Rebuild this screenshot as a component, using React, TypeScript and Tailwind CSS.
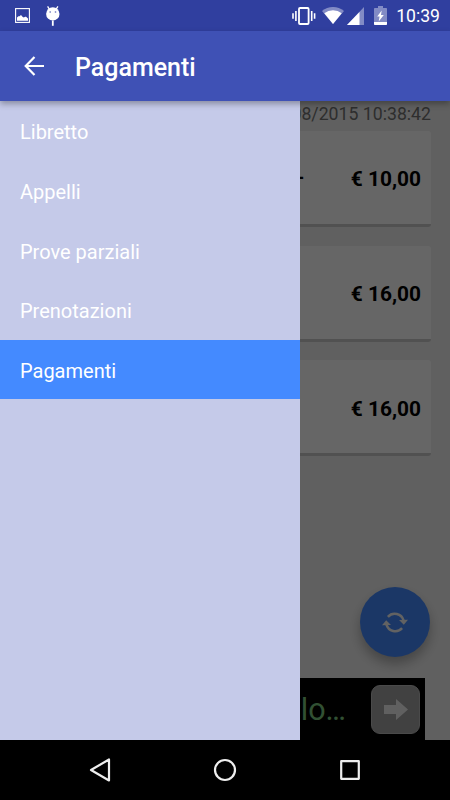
import { useState } from 'react';

const menuItems = ['Libretto', 'Appelli', 'Prove parziali', 'Prenotazioni', 'Pagamenti'];

const payments = [
  { id: 1, label: '–', amount: '€ 10,00' },
  { id: 2, label: '', amount: '€ 16,00' },
  { id: 3, label: '', amount: '€ 16,00' },
];

function StatusBar() {
  return (
    <div className="flex h-[31px] items-center bg-[#303f9f] text-white">
      {/* Notifications */}
      <svg className="ml-[15px]" width="15" height="15" viewBox="0 0 15 15">
        <rect x="0.6" y="0.6" width="13.8" height="13.8" fill="none" stroke="currentColor" strokeWidth="1.1" />
        <path d="M2 12.7V9.6l1.4-1.3h1.1L6 7l1.5 1.7 1.3.8 1.3-.8h1l1.9 1.8v2.2z" fill="currentColor" />
      </svg>
      <svg className="ml-[15px]" width="16" height="20" viewBox="0 0 16 20">
        <path d="M2.6 .4l2.2 3.4M12.9.4l-2.2 3.4" stroke="currentColor" strokeWidth="1.3" />
        <ellipse cx="7.8" cy="7.9" rx="6.7" ry="6.6" fill="currentColor" />
        <path d="M4.5 6h1.4M9.8 6h1.4" stroke="#303f9f" strokeWidth="1.1" />
        <path d="M7.8 14.5v5.3" stroke="currentColor" strokeWidth="1.8" />
      </svg>

      {/* System icons */}
      <svg className="ml-auto" width="24" height="18" viewBox="0 0 24 18">
        <rect x="7" y="1" width="9.6" height="16" rx="1" fill="none" stroke="currentColor" strokeWidth="1.8" />
        <path d="M3.9 4v10M1 6.2v5.6M19.7 4v10M22.6 6.2v5.6" stroke="currentColor" strokeWidth="1.6" />
      </svg>
      <svg className="ml-[6px]" width="22" height="17" viewBox="0 0 22 17">
        <path d="M0 4a17.5 17.5 0 0 1 22 0L11 17z" fill="currentColor" opacity=".4" />
        <path d="M2.3 6.2a14 14 0 0 1 17.4 0L11 17z" fill="currentColor" />
      </svg>
      <svg className="ml-[3px]" width="17" height="18" viewBox="0 0 17 18">
        <path d="M0 18L17 0v18z" fill="currentColor" opacity=".4" />
        <path d="M0 18L12.5 5v13z" fill="currentColor" />
      </svg>
      <svg className="ml-[10px]" width="13" height="19" viewBox="0 0 13 19">
        <path d="M4 0h5v2h3.2q.8 0 .8.8V16H0V2.8Q0 2 .8 2H4z" fill="currentColor" opacity=".4" />
        <path d="M0 16h13v2.2q0 .8-.8.8H.8q-.8 0-.8-.8z" fill="currentColor" />
        <path d="M7.7 4.4L3.2 10.5h2.4l-.9 5 5.1-6.5H7z" fill="currentColor" />
      </svg>
      <span className="mr-[10px] ml-[9px] pt-[2px] text-[17.6px] leading-none">10:39</span>
    </div>
  );
}

function Toolbar({ title }: { title: string }) {
  return (
    <header className="relative z-20 flex h-[70px] items-center bg-[#3f51b5] text-white shadow-[0_3px_6px_rgba(0,0,0,0.3)]">
      <button className="ml-[24px]">
        <svg width="21" height="20" viewBox="0 0 21 20" fill="none" stroke="currentColor" strokeWidth="2.2">
          <path d="M20 10H2M10.5 1L1.7 10l8.8 9" />
        </svg>
      </button>
      <h1 className="ml-[30px] pt-[2px] text-[25px] leading-none font-medium">{title}</h1>
    </header>
  );
}

function Drawer({ selected, onSelect }: { selected: string; onSelect: (item: string) => void }) {
  return (
    <nav className="absolute inset-y-0 left-0 w-[300px] bg-[#c5cae9]">
      {menuItems.map((item) => (
        <button
          key={item}
          onClick={() => onSelect(item)}
          className={`block h-[59.7px] w-full px-5 pt-[2.9px] text-left text-[20px] text-white ${
            item === selected ? 'bg-[#448aff]' : ''
          }`}
        >
          {item}
        </button>
      ))}
    </nav>
  );
}

function PaymentsList() {
  return (
    <div className="flex flex-1 flex-col px-[19px]">
      <p className="h-[30px] pt-[3px] text-right text-[17.7px] leading-[20px] text-[#737373]">08/2015 10:38:42</p>
      <div className="flex flex-col gap-[18.7px]">
        {payments.map((payment) => (
          <div
            key={payment.id}
            className="flex h-[96px] items-center justify-between rounded-[3px] border-b-[3px] border-[#cbcbcb] bg-white px-[10px] font-bold text-black"
          >
            <span className="w-[275px] text-right text-[20px]">{payment.label}</span>
            <span className="pt-[5px] text-[20.9px]">{payment.amount}</span>
          </div>
        ))}
      </div>
    </div>
  );
}

function AdBanner() {
  return (
    <div className="mx-[25px] flex h-[62px] items-center bg-black pr-[5px]">
      <span className="flex-1 pt-[3px] pr-[25px] text-right text-[30.5px] leading-none text-[#7cc87f]">lo…</span>
      <span className="flex size-[49px] items-center justify-center rounded-[9px] border border-[#bababa] bg-[#a4a4a4]">
        <svg width="24" height="21" viewBox="0 0 24 21" fill="#f0f0f0">
          <path d="M0 6h12V0l12 10.5L12 21v-6H0z" />
        </svg>
      </span>
    </div>
  );
}

function NavigationBar() {
  return (
    <div className="h-[60px] bg-black">
      <svg width="450" height="60" viewBox="0 0 450 60" fill="none" stroke="#eee" strokeWidth="2.2" strokeLinejoin="round">
        <path d="M109 19.5v21L91 30z" />
        <circle cx="225" cy="30" r="10" />
        <rect x="341.2" y="21.2" width="17.6" height="17.6" />
      </svg>
    </div>
  );
}

export default function App() {
  const [selected, setSelected] = useState('Pagamenti');

  return (
    <div className="flex h-[800px] w-[450px] flex-col overflow-hidden bg-black font-[Roboto,sans-serif]">
      <StatusBar />
      <Toolbar title={selected} />
      <main className="relative flex flex-1 flex-col bg-[#f0f0f0]">
        <PaymentsList />
        <AdBanner />

        {/* Refresh button */}
        <button className="absolute right-[20px] bottom-[83px] flex size-[70px] items-center justify-center rounded-full bg-[#448aff] text-[#f5f5f5] shadow-[0_7px_12px_rgba(0,0,0,0.28)]">
          <svg width="26" height="23" viewBox="0 0 26 23">
            <path d="M5.9 5.8A9.2 9.2 0 0 1 21.6 9.6M20.1 17.2A9.2 9.2 0 0 1 4.4 13.4" fill="none" stroke="currentColor" strokeWidth="2.5" />
            <path d="M17 8.9l9-.2-4.2 5.1zM9 14.1l-9 .2 4.2-5.1z" fill="currentColor" />
          </svg>
        </button>

        <div className="absolute inset-0 bg-black/60" />
        <Drawer selected={selected} onSelect={setSelected} />
      </main>
      <NavigationBar />
    </div>
  );
}
